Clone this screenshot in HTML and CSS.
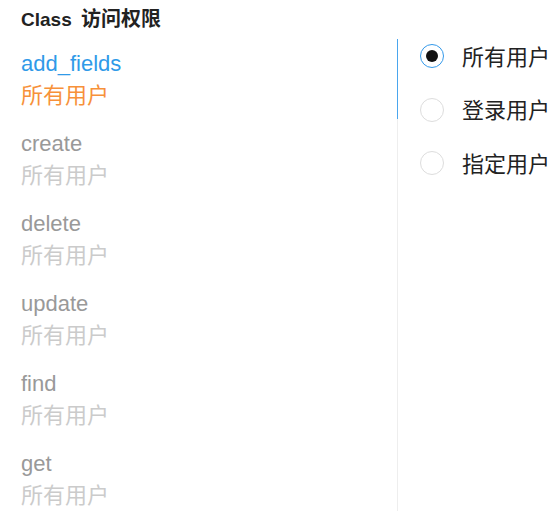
FILE: index.html
```html
<!DOCTYPE html>
<html lang="zh-CN">
<head>
<meta charset="utf-8">
<title>Class 访问权限</title>
<link rel="stylesheet" href="styles.css">
</head>
<body>
<div class="page">
  <h1 class="title">Class <span class="title-cjk">访问权限</span></h1>
  <div class="layout">
    <ul class="ops">
      <li class="op active"><span class="op-name">add_fields</span><span class="op-value">所有用户</span></li>
      <li class="op"><span class="op-name">create</span><span class="op-value">所有用户</span></li>
      <li class="op"><span class="op-name">delete</span><span class="op-value">所有用户</span></li>
      <li class="op"><span class="op-name">update</span><span class="op-value">所有用户</span></li>
      <li class="op"><span class="op-name">find</span><span class="op-value">所有用户</span></li>
      <li class="op"><span class="op-name">get</span><span class="op-value">所有用户</span></li>
    </ul>
    <div class="panel">
      <label class="radio checked"><span class="radio-circle"></span><span class="radio-label">所有用户</span></label>
      <label class="radio"><span class="radio-circle"></span><span class="radio-label">登录用户</span></label>
      <label class="radio"><span class="radio-circle"></span><span class="radio-label">指定用户</span></label>
    </div>
  </div>
</div>
</body>
</html>
```
FILE: styles.css
```css
html, body {
  margin: 0;
  padding: 0;
  background: #fff;
}
body {
  font-family: "Liberation Sans", "Noto Sans CJK SC", sans-serif;
  overflow: hidden;
}
.page {
  padding-left: 21px;
}
.title {
  margin: 0;
  padding-top: 6px;
  margin-bottom: 7px;
  font-size: 19px;
  line-height: 24px;
  font-weight: bold;
  color: #222;
}
.title-cjk {
  font-family: "Noto Sans CJK SC", sans-serif;
  font-size: 20px;
  margin-left: 4px;
}
.layout {
  display: flex;
  align-items: flex-start;
}
.ops {
  list-style: none;
  margin: 0;
  padding: 0;
  width: 377px;
}
.op {
  display: flex;
  flex-direction: column;
  box-sizing: border-box;
  height: 80px;
  padding-top: 9px;
  border-right: 1px solid #eeeeee;
}
.op.active {
  border-right-color: #4aa6ee;
}
.op-name {
  font-size: 22px;
  line-height: 32px;
  color: #999;
}
.op-value {
  font-family: "Noto Sans CJK SC", sans-serif;
  font-size: 22px;
  line-height: 26px;
  color: #cbcbcb;
}
.op.active .op-name {
  color: #2f9ae8;
}
.op.active .op-value {
  color: #f7913a;
}
.panel {
  display: flex;
  flex-direction: column;
  gap: 29.5px;
  padding-top: 5px;
  padding-left: 22px;
}
.radio {
  display: flex;
  align-items: center;
  height: 24px;
}
.radio-circle {
  box-sizing: border-box;
  width: 24px;
  height: 24px;
  border-radius: 50%;
  border: 1px solid #dddddd;
  display: flex;
  align-items: center;
  justify-content: center;
}
.radio.checked .radio-circle {
  border-color: #3399ea;
}
.radio.checked .radio-circle::after {
  content: "";
  width: 12px;
  height: 12px;
  border-radius: 50%;
  background: #111;
}
.radio-label {
  margin-left: 18px;
  padding-bottom: 3px;
  font-family: "Noto Sans CJK SC", sans-serif;
  font-size: 22px;
  line-height: 22px;
  color: #222;
}
```
